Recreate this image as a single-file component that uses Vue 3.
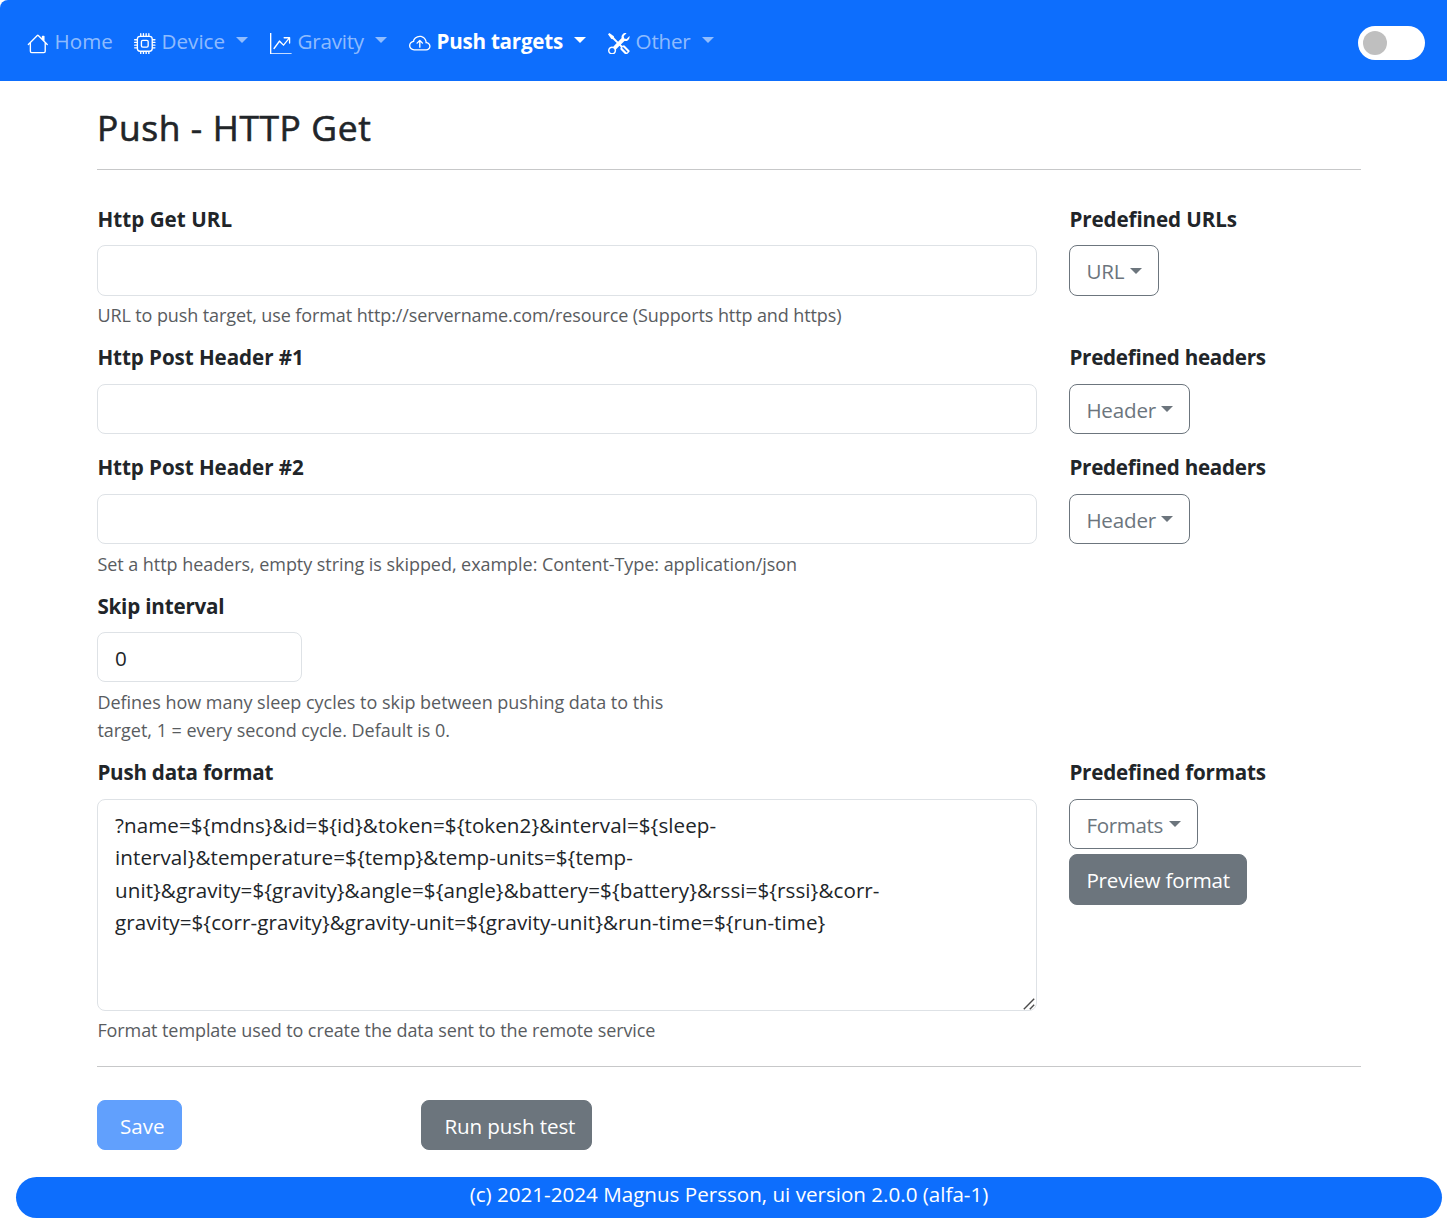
<script setup>
import { ref } from 'vue'

const navItems = [
  {
    id: 'home', label: 'Home', menu: false,
    paths: ['M8.707 1.5a1 1 0 0 0-1.414 0L.646 8.146a.5.5 0 0 0 .708.708L2 8.207V13.5A1.5 1.5 0 0 0 3.5 15h9a1.5 1.5 0 0 0 1.5-1.5V8.207l.646.647a.5.5 0 0 0 .708-.708L13 5.793V2.5a.5.5 0 0 0-.5-.5h-1a.5.5 0 0 0-.5.5v1.293zM13 7.207V13.5a.5.5 0 0 1-.5.5h-9a.5.5 0 0 1-.5-.5V7.207l5-5z']
  },
  {
    id: 'device', label: 'Device', menu: true,
    paths: ['M5 0a.5.5 0 0 1 .5.5V2h1V.5a.5.5 0 0 1 1 0V2h1V.5a.5.5 0 0 1 1 0V2h1V.5a.5.5 0 0 1 1 0V2A2.5 2.5 0 0 1 14 4.5h1.5a.5.5 0 0 1 0 1H14v1h1.5a.5.5 0 0 1 0 1H14v1h1.5a.5.5 0 0 1 0 1H14v1h1.5a.5.5 0 0 1 0 1H14a2.5 2.5 0 0 1-2.5 2.5v1.5a.5.5 0 0 1-1 0V14h-1v1.5a.5.5 0 0 1-1 0V14h-1v1.5a.5.5 0 0 1-1 0V14h-1v1.5a.5.5 0 0 1-1 0V14A2.5 2.5 0 0 1 2 11.5H.5a.5.5 0 0 1 0-1H2v-1H.5a.5.5 0 0 1 0-1H2v-1H.5a.5.5 0 0 1 0-1H2v-1H.5a.5.5 0 0 1 0-1H2A2.5 2.5 0 0 1 4.5 2V.5A.5.5 0 0 1 5 0m-.5 3A1.5 1.5 0 0 0 3 4.5v7A1.5 1.5 0 0 0 4.5 13h7a1.5 1.5 0 0 0 1.5-1.5v-7A1.5 1.5 0 0 0 11.5 3zM5 6.5A1.5 1.5 0 0 1 6.5 5h3A1.5 1.5 0 0 1 11 6.5v3A1.5 1.5 0 0 1 9.5 11h-3A1.5 1.5 0 0 1 5 9.5zM6.5 6a.5.5 0 0 0-.5.5v3a.5.5 0 0 0 .5.5h3a.5.5 0 0 0 .5-.5v-3a.5.5 0 0 0-.5-.5z']
  },
  {
    id: 'gravity', label: 'Gravity', menu: true,
    paths: ['M0 0h1v15h15v1H0zm10 3.5a.5.5 0 0 1 .5-.5h4a.5.5 0 0 1 .5.5v4a.5.5 0 0 1-1 0V4.9l-3.613 4.417a.5.5 0 0 1-.74.037L7.06 6.767l-3.656 5.027a.5.5 0 0 1-.808-.588l4-5.5a.5.5 0 0 1 .758-.06l2.609 2.61L13.445 4H10.5a.5.5 0 0 1-.5-.5']
  },
  {
    id: 'push', label: 'Push targets', menu: true, active: true,
    paths: [
      'M7.646 5.146a.5.5 0 0 1 .708 0l2 2a.5.5 0 0 1-.708.708L8.5 6.707V10.5a.5.5 0 0 1-1 0V6.707L6.354 7.854a.5.5 0 1 1-.708-.708z',
      'M4.406 3.342A5.53 5.53 0 0 1 8 2c2.69 0 4.923 2 5.166 4.579C14.758 6.804 16 8.137 16 9.773 16 11.569 14.502 13 12.687 13H3.781C1.708 13 0 11.366 0 9.318c0-1.763 1.266-3.223 2.942-3.593.143-.863.698-1.723 1.464-2.383m.653.757c-.757.653-1.153 1.44-1.153 2.056v.448l-.445.049C2.064 6.805 1 7.952 1 9.318 1 10.785 2.23 12 3.781 12h8.906C13.98 12 15 10.988 15 9.773c0-1.216-1.02-2.228-2.313-2.228h-.5v-.5C12.188 4.825 10.328 3 8 3a4.53 4.53 0 0 0-2.941 1.1z'
    ]
  },
  {
    id: 'other', label: 'Other', menu: true,
    paths: ['M1 0 0 1l2.2 3.081a1 1 0 0 0 .815.419h.07a1 1 0 0 1 .708.293l2.675 2.675-2.617 2.654A3.003 3.003 0 0 0 0 13a3 3 0 1 0 5.878-.851l2.654-2.617.968.968-.305.914a1 1 0 0 0 .242 1.023l3.27 3.27a.997.997 0 0 0 1.414 0l1.586-1.586a.997.997 0 0 0 0-1.414l-3.27-3.27a1 1 0 0 0-1.023-.242L10.5 9.5l-.96-.96 2.68-2.643A3.005 3.005 0 0 0 16 3q0-.405-.102-.777l-2.14 2.141L12 4l-.364-1.757L13.777.102a3 3 0 0 0-3.675 3.68L7.462 6.46 4.793 3.793a1 1 0 0 1-.293-.707v-.071a1 1 0 0 0-.419-.814zm9.646 10.646a.5.5 0 0 1 .708 0l2.914 2.915a.5.5 0 0 1-.707.707l-2.915-2.914a.5.5 0 0 1 0-.708M3 11l.471.242.529.026.287.445.445.287.026.529L5 13l-.242.471-.026.529-.445.287-.287.445-.529.026L3 15l-.471-.242L2 14.732l-.287-.445L1.268 14l-.026-.529L1 13l.242-.471.026-.529.445-.287.287-.445.529-.026z']
  }
]

const url = ref('')
const header1 = ref('')
const header2 = ref('')
const skip = ref('0')
const format = ref([
  '?name=${mdns}&id=${id}&token=${token2}&interval=${sleep-',
  'interval}&temperature=${temp}&temp-units=${temp-',
  'unit}&gravity=${gravity}&angle=${angle}&battery=${battery}&rssi=${rssi}&corr-',
  'gravity=${corr-gravity}&gravity-unit=${gravity-unit}&run-time=${run-time}'
].join('\n'))
</script>

<template>
  <div class="page">
    <nav class="navbar">
      <a v-for="item in navItems" :key="item.id" class="nav-item" :class="[item.id, { active: item.active }]">
        <svg class="icon" viewBox="0 0 16 16" fill="currentColor">
          <path v-for="(d, i) in item.paths" :key="i" :d="d" />
        </svg>
        <span class="nav-label">{{ item.label }}</span>
        <i v-if="item.menu" class="caret"></i>
      </a>
      <span class="toggle"><span class="knob"></span></span>
    </nav>

    <main class="container">
      <h1 class="title">Push - HTTP Get</h1>
      <hr class="rule" />

      <div class="form">
        <div class="main-col">
          <label class="label l-url">Http Get URL</label>
          <input v-model="url" class="control tall" type="text" />
          <p class="help h-url">URL to push target, use format http://servername.com/resource (Supports http and https)</p>
        </div>
        <div class="side-col">
          <label class="label l-purl">Predefined URLs</label>
          <button class="btn outline b-url"><span>URL</span><i class="caret"></i></button>
        </div>

        <div class="main-col">
          <label class="label raised l-h">Http Post Header #1</label>
          <input v-model="header1" class="control" type="text" />
        </div>
        <div class="side-col">
          <label class="label raised l-ph">Predefined headers</label>
          <button class="btn outline b-header"><span>Header</span><i class="caret"></i></button>
        </div>

        <div class="main-col">
          <label class="label raised l-h">Http Post Header #2</label>
          <input v-model="header2" class="control" type="text" />
          <p class="help h-head">Set a http headers, empty string is skipped, example: Content-Type: application/json</p>
        </div>
        <div class="side-col">
          <label class="label raised l-ph">Predefined headers</label>
          <button class="btn outline b-header"><span>Header</span><i class="caret"></i></button>
        </div>

        <div class="main-col">
          <label class="label l-skip">Skip interval</label>
          <input v-model="skip" class="control small" type="text" />
          <p class="help h-skip">Defines how many sleep cycles to skip between pushing data to this<br />target, 1 = every second cycle. Default is 0.</p>
        </div>
        <div class="side-col"></div>

        <div class="main-col">
          <label class="label raised l-push">Push data format</label>
          <div class="area-wrap">
            <textarea v-model="format" class="control area" spellcheck="false"></textarea>
            <svg class="grip" viewBox="0 0 12 12" fill="none" stroke="#4a4a4a" stroke-width="1.4">
              <path d="M.8 11.2 11.2.8M6.8 11.2l4.4-4.4" />
            </svg>
          </div>
          <p class="help h-fmt">Format template used to create the data sent to the remote service</p>
        </div>
        <div class="side-col">
          <label class="label raised l-pf">Predefined formats</label>
          <button class="btn outline b-formats"><span>Formats</span><i class="caret"></i></button>
          <button class="btn solid b-preview"><span>Preview format</span></button>
        </div>
      </div>

      <hr class="rule" />
      <div class="actions">
        <button class="btn primary b-save" disabled><span>Save</span></button>
        <button class="btn solid b-run"><span>Run push test</span></button>
      </div>
    </main>

    <footer class="footer"><span>(c) 2021-2024 Magnus Persson, ui version 2.0.0 (alfa-1)</span></footer>
  </div>
</template>

<style>
body {
  margin: 0;
  background: #fff;
}
</style>

<style scoped>
.page {
  height: 1224px;
  overflow: hidden;
  font-family: "Open Sans", "Noto Sans", sans-serif;
  font-size: 20.6px;
  color: #212529;
}
.page * {
  box-sizing: border-box;
}
.navbar {
  display: flex;
  align-items: center;
  height: 81px;
  padding: 0 22px 0 27px;
  background: #0d6efd;
  border-top-left-radius: 8px;
}
.nav-item {
  display: flex;
  align-items: center;
  white-space: nowrap;
  color: rgba(255, 255, 255, 0.55);
}
.icon {
  flex: none;
  width: 21.6px;
  height: 21.6px;
  margin: 6px 6px 0 0;
  color: #fff;
}
.nav-label {
  line-height: 32px;
  margin-top: 0;
}
.active {
  color: #fff;
  font-weight: 700;
}
.home { width: 107px; }
.device { width: 136px; }
.gravity { width: 139px; letter-spacing: -0.25px; }
.push { width: 199px; letter-spacing: -0.25px; }
.other { letter-spacing: -0.2px; }
.caret {
  display: inline-block;
  flex: none;
  border-top: 6.4px solid currentColor;
  border-left: 6.4px solid transparent;
  border-right: 6.4px solid transparent;
}
.nav-item .caret {
  margin-left: 11px;
  margin-top: -1px;
}
.toggle {
  display: flex;
  align-items: center;
  width: 67px;
  height: 34px;
  margin: 5px 0 0 auto;
  padding-left: 5px;
  border-radius: 17px;
  background: #fff;
}
.knob {
  width: 24px;
  height: 24px;
  border-radius: 50%;
  background: #bfbfbf;
}
.container {
  width: 1264px;
  margin-left: 97px;
}
.title {
  margin: 0;
  height: 88px;
  padding-top: 24px;
  font-size: 35.4px;
  font-weight: 500;
  line-height: 44px;
  letter-spacing: 0.62px;
  -webkit-text-stroke: 0.6px currentColor;
}
.rule {
  height: 1px;
  margin: 0;
  border: 0;
  background: #c7c8c9;
}
.form {
  display: grid;
  grid-template-columns: 940px 1fr;
  grid-template-rows: 139px 110px 138px 167px 309px;
  column-gap: 32px;
  padding-top: 33px;
}
.label {
  display: block;
  height: 42px;
  padding-left: 0.4px;
  font-weight: 700;
  line-height: 32px;
  white-space: nowrap;
}
.raised { line-height: 30px; }
.l-url { letter-spacing: 0.05px; }
.l-purl { letter-spacing: -0.1px; }
.l-h { letter-spacing: -0.07px; }
.l-ph { letter-spacing: -0.25px; }
.l-skip { letter-spacing: -0.19px; }
.l-push { letter-spacing: -0.23px; }
.l-pf { letter-spacing: -0.2px; }
.control {
  display: block;
  width: 100%;
  height: 50px;
  margin: 0;
  padding: 1px 17px 0;
  border: 1px solid #dee2e6;
  border-radius: 8px;
  outline: 0;
  background: #fff;
  font: inherit;
  color: inherit;
}
.tall {
  height: 51px;
}
.small {
  width: 205px;
}
.area-wrap {
  position: relative;
}
.area {
  height: 212px;
  padding: 9px 17px;
  line-height: 32.3px;
  letter-spacing: 0.07px;
  white-space: pre;
  overflow: hidden;
  resize: none;
}
.grip {
  position: absolute;
  right: 2px;
  bottom: 1.5px;
  width: 12px;
  height: 12px;
}
.help {
  margin: 6px 0 0;
  padding-left: 0.4px;
  font-size: 18px;
  line-height: 28px;
  white-space: nowrap;
  color: #595c5f;
  font-weight: 400;
}
.h-url { margin-top: 5px; letter-spacing: -0.1px; }
.h-head { letter-spacing: -0.05px; }
.h-skip { letter-spacing: -0.02px; }
.h-fmt { margin-top: 5px; letter-spacing: -0.085px; }
.btn {
  display: flex;
  align-items: center;
  height: 50px;
  padding: 1px 0 0 16.4px;
  border: 1px solid #6c757d;
  border-radius: 8px;
  font: inherit;
  letter-spacing: -0.2px;
  white-space: nowrap;
}
.outline {
  background: #fff;
  color: #6c757d;
}
.outline .caret {
  margin: -1px 0 0 5.5px;
}
.solid {
  background: #6c757d;
  color: #fff;
}
.primary {
  border-color: #0d6efd;
  background: #0d6efd;
  color: #fff;
  opacity: 0.65;
}
.b-url { width: 90px; height: 51px; }
.b-header { width: 121px; }
.b-formats { width: 129px; letter-spacing: -0.35px; }
.b-preview { width: 178px; height: 51px; margin-top: 5px; }
.b-save { width: 85px; padding-left: 22px; letter-spacing: 0; }
.b-run { width: 171px; margin-left: 239px; padding-left: 22.5px; letter-spacing: -0.12px; }
.actions {
  display: flex;
  padding-top: 33px;
}
.footer {
  width: 1426px;
  height: 41px;
  margin: 27px 0 0 16px;
  border-radius: 20.5px;
  background: #0d6efd;
  color: #fff;
  text-align: center;
  line-height: 35px;
}
</style>
